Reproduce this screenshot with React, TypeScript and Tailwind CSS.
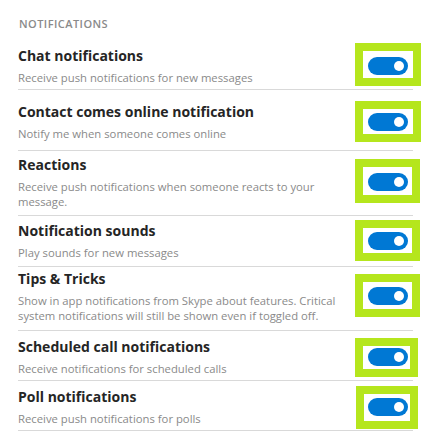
import React from "react";

type Row = {
  title: string;
  lines: string[];
  pad: string;
  box: string;
};

const rows: Row[] = [
  {
    title: "Chat notifications",
    lines: ["Receive push notifications for new messages"],
    pad: "pt-[15px] pb-[4px]",
    box: "-top-[14px] -bottom-[11px] -left-[13px] -right-[13px]",
  },
  {
    title: "Contact comes online notification",
    lines: ["Notify me when someone comes online"],
    pad: "pt-[12px] pb-[9px]",
    box: "-top-[12px] -bottom-[11px] -left-[13px] -right-[13px]",
  },
  {
    title: "Reactions",
    lines: ["Receive push notifications when someone reacts to your", "message."],
    pad: "pt-[4px] pb-[6px]",
    box: "-top-[14px] -bottom-[12px] -left-[13px] -right-[12px]",
  },
  {
    title: "Notification sounds",
    lines: ["Play sounds for new messages"],
    pad: "pt-[5px] pb-[6px]",
    box: "-top-[12px] -bottom-[11px] -left-[13px] -right-[12px]",
  },
  {
    title: "Tips & Tricks",
    lines: [
      "Show in app notifications from Skype about features. Critical",
      "system notifications will still be shown even if toggled off.",
    ],
    pad: "pt-[2px] pb-[7px]",
    box: "-top-[13px] -bottom-[12px] -left-[13px] -right-[12px]",
  },
  {
    title: "Scheduled call notifications",
    lines: ["Receive notifications for scheduled calls"],
    pad: "pt-[6px] pb-[4px]",
    box: "-top-[10px] -bottom-[11px] -left-[13px] -right-[10px]",
  },
  {
    title: "Poll notifications",
    lines: ["Receive push notifications for polls"],
    pad: "pt-[6px] pb-[4px]",
    box: "-top-[12px] -bottom-[13px] -left-[12px] -right-[10px]",
  },
];

function Toggle({ box }: { box: string }) {
  return (
    <div className="relative shrink-0">
      <div className={`absolute border-[8px] border-[#b5e61d] ${box}`} />
      <div className="relative flex h-[18px] w-[40px] items-center justify-end rounded-full bg-[#0078d4] pr-[4px]">
        <div className="h-[10px] w-[10px] rounded-full bg-white" />
      </div>
    </div>
  );
}

export default function App() {
  return (
    <div
      className="h-[446px] w-[430px] overflow-hidden bg-white pt-[17px]"
      style={{ fontFamily: '"Open Sans", "Noto Sans", sans-serif' }}
    >
      <div className="ml-[18px] w-[395px]">
        <div className="pl-[1px] text-[11px] font-semibold leading-[14px] tracking-[0.45px] text-[#8a8a8a]">
          NOTIFICATIONS
        </div>

        {rows.map((row) => (
          <div
            key={row.title}
            className={`flex items-center justify-between border-b border-[#d9d9d9] pr-[5px] ${row.pad}`}
          >
            <div className="whitespace-nowrap">
              <div className="text-[14px] font-bold leading-[20px] text-[#252525]">
                {row.title}
              </div>
              <div className="mt-[4px] text-[11.3px] leading-[15px] text-[#8a8a8a]">
                {row.lines.map((l) => (
                  <div key={l}>{l}</div>
                ))}
              </div>
            </div>
            <Toggle box={row.box} />
          </div>
        ))}
      </div>
    </div>
  );
}
